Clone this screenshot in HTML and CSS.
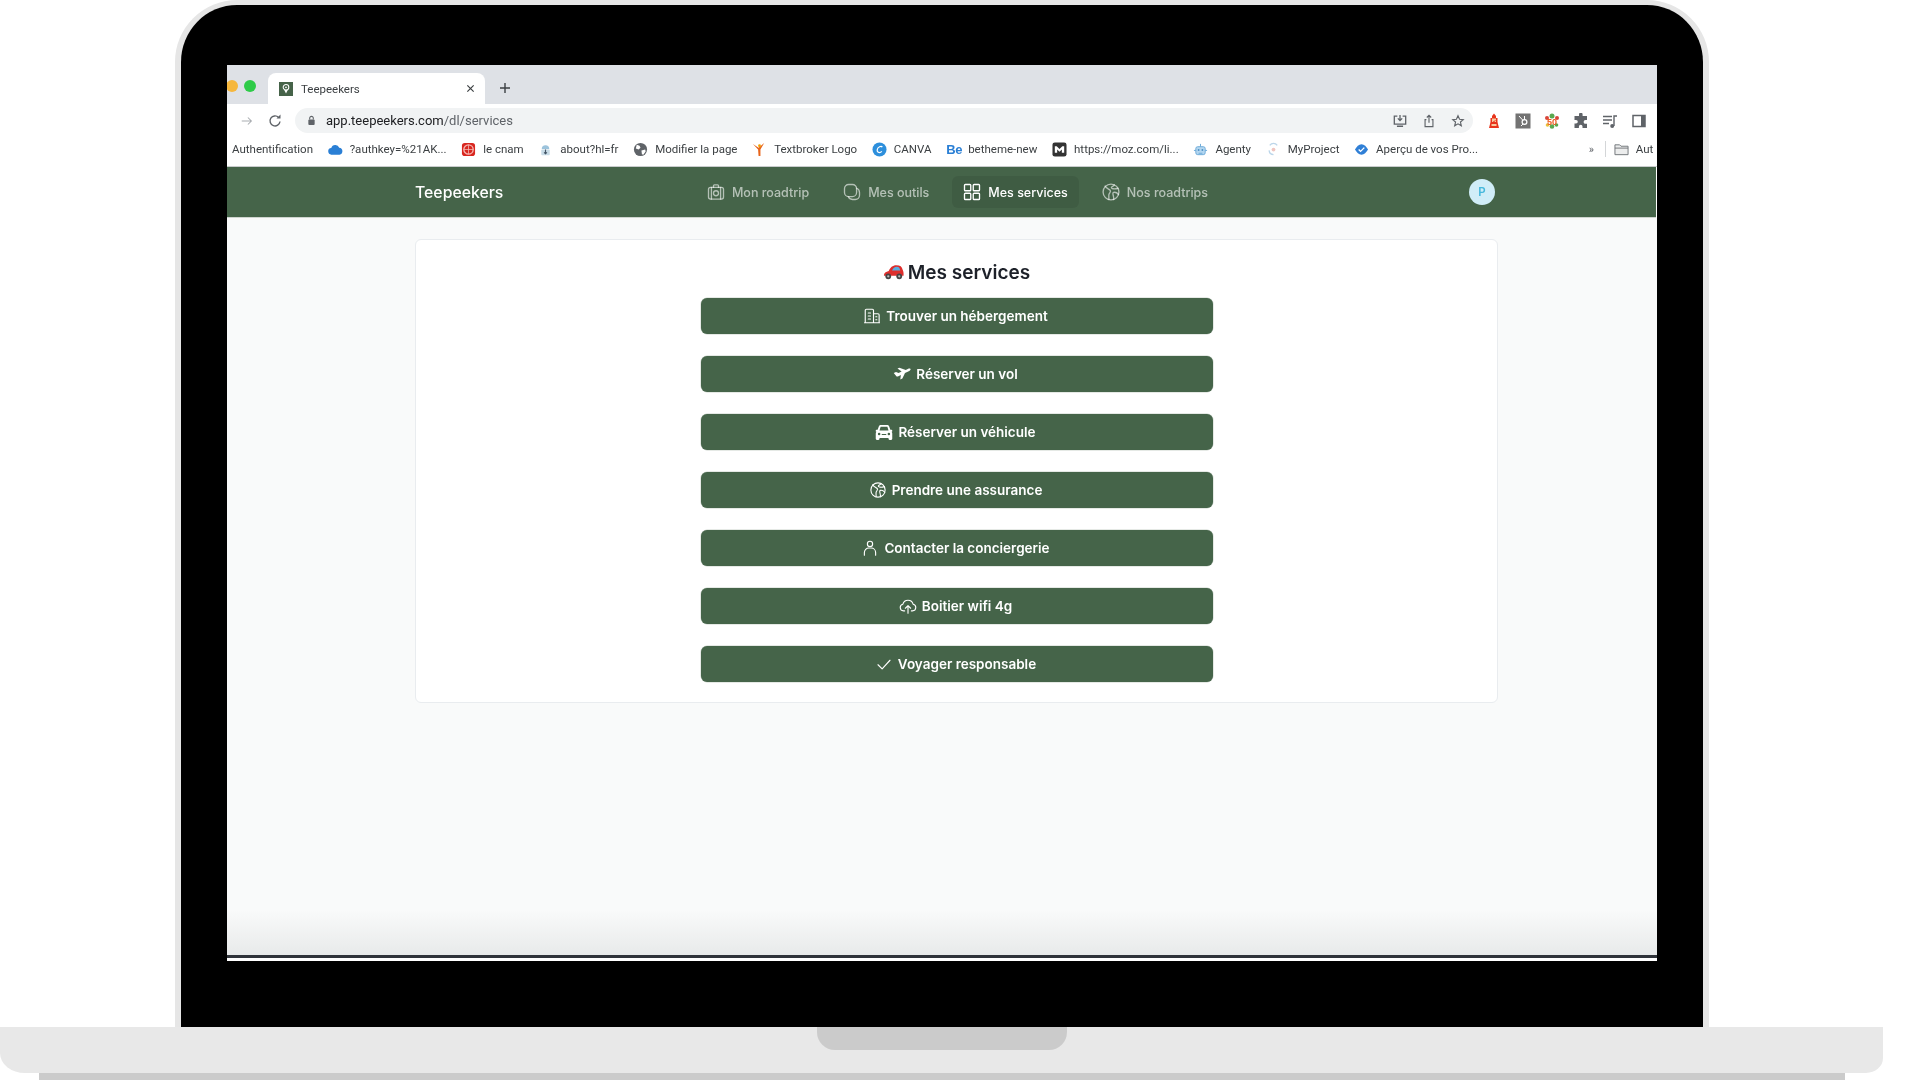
FILE: index.html
```html
<!DOCTYPE html>
<html lang="fr">
<head>
<meta charset="utf-8">
<title>Teepeekers</title>
<link rel="stylesheet" href="styles.css">
</head>
<body>
<div class="device">
  <div class="lid">
    <div class="screen">
      <div class="tabstrip">
        <span class="light yellow"></span>
        <span class="light green"></span>
        <div class="tab">
          <svg class="favicon" viewBox="0 0 16 16"><rect width="16" height="16" fill="#466349"/><circle cx="8" cy="6" r="3.2" fill="none" stroke="#fff" stroke-width="1.2"/><path d="M6 9l2 4 2-4" fill="#fff"/><circle cx="8" cy="6" r="1" fill="#fff"/></svg>
          <span class="tab-title">Teepeekers</span>
          <svg class="tab-close" viewBox="0 0 10 10"><path d="M1.5 1.5l7 7M8.5 1.5l-7 7" stroke="#3c4043" stroke-width="1.3"/></svg>
        </div>
        <svg class="tab-new" viewBox="0 0 12 12"><path d="M6 1v10M1 6h10" stroke="#3c4043" stroke-width="1.4"/></svg>
      </div>
      <div class="toolbar">
        <span class="tool"><svg viewBox="0 0 16 16" class="ic14"><path d="M2 8h11M9 4l4 4-4 4" fill="none" stroke="#a9adb1" stroke-width="1.2"/></svg></span>
        <span class="tool tool-reload"><svg viewBox="0 0 16 16" class="ic16"><path d="M13 8.5A5 5 0 1 1 11.6 4.4" fill="none" stroke="#5f6368" stroke-width="1.4"/><path d="M9.5 5.4h4v-4z" fill="#5f6368"/></svg></span>
        <div class="address">
          <svg class="lock" viewBox="0 0 10 12"><path d="M3 5V3.4a2 2 0 0 1 4 0V5" fill="none" stroke="#5f6368" stroke-width="1.2"/><rect x="1.5" y="5" width="7" height="6" rx="1" fill="#5f6368"/></svg>
          <span class="url">app.teepeekers.com<span class="url-path">/dl/services</span></span>
          <span class="addr-icon"><svg viewBox="0 0 16 16" class="ic14"><path d="M5 2.500H1.500v9h13v-9H11M8 1v6.500M5.500 5L8 7.500 10.500 5M4.500 14h7" fill="none" stroke="#5f6368" stroke-width="1.500"/></svg></span>
          <span class="addr-icon"><svg viewBox="0 0 16 16" class="ic14"><path d="M5 6.500H3.500v8h9v-8H11M8 10V1.500M5.500 4L8 1.500 10.500 4" fill="none" stroke="#5f6368" stroke-width="1.3"/></svg></span>
          <span class="addr-icon"><svg viewBox="0 0 16 16" class="ic14"><path d="M8 2l1.800 4 4.200.4-3.200 2.800 1 4.300L8 11.200 4.200 13.500l1-4.300L2 6.400 6.200 6z" fill="none" stroke="#5f6368" stroke-width="1.3"/></svg></span>
        </div>
        <div class="extensions">
          <span class="tool"><svg viewBox="0 0 16 16" class="ic16"><path d="M8 .5l2 2.500v2h1.500V9L13 15H3L4.500 9V5H6V3z" fill="#e8341c"/><rect x="6" y="5.500" width="4" height="3.500" fill="#f7c9a0"/><path d="M6.500 9.500l3-2" stroke="#e8341c"/><rect x="5.500" y="11" width="5" height="2" fill="#f7c9a0"/></svg></span>
          <span class="tool"><svg viewBox="0 0 16 16" class="ic16"><rect width="15" height="15" x=".5" y=".5" fill="#737373"/><circle cx="9.500" cy="9" r="2.400" fill="none" stroke="#fff" stroke-width="1.200"/><path d="M4 3l3.800 4.200M9.500 3v3.500M6 13l2-2" stroke="#fff" stroke-width="1"/></svg></span>
          <span class="tool"><svg viewBox="0 0 16 16" class="ic16"><circle cx="8" cy="3" r="2.500" fill="#5aa84f"/><circle cx="3" cy="5" r="2" fill="#d9453a"/><circle cx="13" cy="5" r="2" fill="#d9453a"/><circle cx="8" cy="13.500" r="2.300" fill="#5aa84f"/><circle cx="3.500" cy="12" r="1.800" fill="#e9c23d"/><circle cx="12.500" cy="12" r="1.800" fill="#5aa84f"/><text class="ext-fifty" x="8" y="11.500" text-anchor="middle">50</text></svg></span>
          <span class="tool"><svg viewBox="0 0 16 16" class="ic16"><path d="M6 1.500a1.800 1.800 0 0 1 3.600 0V3H14v4h-1.500a1.900 1.900 0 0 0 0 3.800H14V15H9.500v-1.500a1.800 1.800 0 0 0-3.600 0V15H1.500v-4.500H3a1.800 1.800 0 0 0 0-3.600H1.500V3H6z" fill="#5f6368"/></svg></span>
          <span class="tool"><svg viewBox="0 0 16 16" class="ic16"><path d="M1 3.500h9M1 7h9M1 10.500h6" stroke="#5f6368" stroke-width="1.400"/><path d="M12 13V3h3" fill="none" stroke="#5f6368" stroke-width="1.400"/><circle cx="10.200" cy="13" r="2" fill="#5f6368"/></svg></span>
          <span class="tool"><svg viewBox="0 0 16 16" class="ic16"><rect x="2" y="2.500" width="12" height="11" fill="none" stroke="#5f6368" stroke-width="1.500"/><rect x="10" y="2.500" width="4" height="11" fill="#5f6368"/></svg></span>
        </div>
      </div>
      <div class="bookmarks">
        <span class="bm">Authentification</span>
        <span class="bm"><svg class="bm-ic" viewBox="0 0 16 12"><path d="M4 11.500a3.500 3.500 0 0 1-.5-7A4.500 4.500 0 0 1 12 4a3.800 3.800 0 0 1 .3 7.500z" fill="#2a7fd5"/></svg>?authkey=%21AK...</span>
        <span class="bm"><svg class="bm-ic" viewBox="0 0 16 16"><rect x="1" y="1" width="14" height="14" rx="3" fill="#d8261f"/><circle cx="8" cy="8" r="5" fill="none" stroke="#f6b9b4" stroke-width="1.400"/><path d="M8 3v10M3 8h10" stroke="#f6b9b4" stroke-width=".8"/></svg>le cnam</span>
        <span class="bm"><svg class="bm-ic" viewBox="0 0 16 16"><path d="M4 7.500a4 4 0 0 1 8 0z" fill="#9cc3dc"/><rect x="3.500" y="8" width="9" height="6" rx="1" fill="#c7dbe7"/><path d="M8 8v4.500M6.500 11L8 12.500 9.500 11" stroke="#456" fill="none" stroke-width="1.200"/></svg>about?hl=fr</span>
        <span class="bm"><svg class="bm-ic" viewBox="0 0 16 16"><circle cx="8" cy="8" r="7" fill="#5f6368"/><path d="M4 3l3 1 1 2-2 2-3-1zM9 9l4-1 .5 2-2.500 3.500-1.500-.500z" fill="#fff"/></svg>Modifier la page</span>
        <span class="bm"><svg class="bm-ic" viewBox="0 0 16 16"><path d="M1 2l6 4 6-5-4 7 0 7H7L6.500 8z" fill="#e8641b"/><circle cx="8" cy="4" r="1.500" fill="#f2a100"/></svg>Textbroker Logo</span>
        <span class="bm"><svg class="bm-ic" viewBox="0 0 16 16"><circle cx="8" cy="8" r="7.500" fill="#2d8fdc"/><path d="M11 5.500C10 3.800 6 5 5.500 8.500 5.200 11.500 8.500 12 10.500 10" fill="none" stroke="#fff" stroke-width="1.300"/></svg>CANVA</span>
        <span class="bm"><span class="behance">Be</span>betheme-new</span>
        <span class="bm"><svg class="bm-ic" viewBox="0 0 16 16"><rect x=".5" y=".5" width="15" height="15" rx="2.500" fill="#333"/><path d="M3 11.500V4.500h2l3 3 3-3h2v7h-2.500V8L8 10.500 5.500 8v3.500z" fill="#fff"/></svg>https://moz.com/li...</span>
        <span class="bm"><svg class="bm-ic" viewBox="0 0 16 16"><rect x="3" y="5" width="10" height="8.500" rx="2" fill="#b3d6f0" stroke="#6aa9d8"/><path d="M8 5V2M1 9h2M13 9h2M6 12h4" stroke="#6aa9d8"/><circle cx="6" cy="8.500" r="1" fill="#4c8fc4"/><circle cx="10" cy="8.500" r="1" fill="#4c8fc4"/></svg>Agenty</span>
        <span class="bm"><svg class="bm-ic" viewBox="0 0 16 16"><path d="M4 3.500a5 5 0 0 1 8 0M3.300 9A5 5 0 0 0 8 13.500" fill="none" stroke="#bcd6ea" stroke-width="1.400"/><circle cx="8" cy="8" r="2" fill="#eec5c0"/></svg>MyProject</span>
        <span class="bm"><svg class="bm-ic" viewBox="0 0 16 14"><path d="M8 1.500c3 0 5 2.500 7 5.500-2 3-4 5.500-7 5.500S3 10 1 7c2-3 4-5.500 7-5.500z" fill="#2f7fd6"/><path d="M5 7l2 2 4-4" fill="none" stroke="#fff" stroke-width="1.500"/></svg>Aperçu de vos Pro...</span>
        <span class="bm-more">»</span>
        <span class="bm-sep"></span>
        <span class="bm bm-folder"><svg class="bm-ic" viewBox="0 0 16 14"><path d="M1 12.500V2h5l1.500 1.500H15v9z" fill="#eceded" stroke="#6f7378"/><path d="M1 5.500h14" stroke="#6f7378"/></svg>Aut</span>
      </div>
      <nav class="appnav">
        <span class="brand">Teepeekers</span>
        <div class="menu">
          <a class="menu-item"><svg class="ic" viewBox="0 0 24 24"><rect x="3" y="6.500" width="18" height="14" rx="2.500"/><path d="M9 6.500V4.500a1 1 0 0 1 1-1h4a1 1 0 0 1 1 1v2"/><circle cx="12" cy="13.500" r="3"/><path d="M6.500 6.500v14M17.500 6.500v14"/></svg>Mon roadtrip</a>
          <a class="menu-item"><svg class="ic" viewBox="0 0 24 24"><rect x="3" y="3" width="14.500" height="14.500" rx="5"/><path d="M17.500 7.500a5.500 5.500 0 0 1 3.500 5V16a5 5 0 0 1-5 5h-3.500a5.500 5.500 0 0 1-5-3.500"/></svg>Mes outils</a>
          <a class="menu-item active"><svg class="ic" viewBox="0 0 24 24"><rect x="3" y="3" width="7.500" height="7.500" rx="1"/><rect x="13.500" y="3" width="7.500" height="7.500" rx="1"/><rect x="3" y="13.500" width="7.500" height="7.500" rx="1"/><rect x="13.500" y="13.500" width="7.500" height="7.500" rx="1"/></svg>Mes services</a>
          <a class="menu-item"><svg class="ic" viewBox="0 0 24 24"><circle cx="12" cy="12" r="9.500"/><path d="M5 5c1.500 3 4 3 6 5 1.500 1.500-1 3-1.500 5-.3 2 0 4 0 6M21 15c-2-2.500-4-3-6-2.500-1.500.5-.5 3 0 5 .3 1 .3 2.500 0 3.500M16 3.500c-1 2-3 1.500-3.500 3-.3 1.500 3 2.500 8 1"/></svg>Nos roadtrips</a>
        </div>
        <span class="avatar">P</span>
      </nav>
      <main class="content">
        <section class="card">
          <h1 class="card-title">
            <svg class="car" viewBox="0 0 22 16"><path d="M1 11.500c0-2.500 2-3.500 5-4.500C7.500 3.500 10 1 14 1s6 1.500 6.500 4.500c1 2 1.300 4 1 6.500H1z" fill="#dd2e2c"/><path d="M9.500 6.500c1-2.500 2.500-4 5-4 2 0 3 1 3.500 4z" fill="#5aaee0"/><circle cx="5.500" cy="12.500" r="3" fill="#444"/><circle cx="17" cy="12.500" r="3" fill="#444"/><circle cx="5.500" cy="12.500" r="1.200" fill="#bbb"/><circle cx="17" cy="12.500" r="1.200" fill="#bbb"/></svg>
            Mes services
          </h1>
          <div class="actions">
            <a class="action"><svg class="ic" viewBox="0 0 24 24"><path d="M3 21V4.500A1.500 1.500 0 0 1 4.500 3h8A1.500 1.500 0 0 1 14 4.500V21M14 9h6a1.500 1.500 0 0 1 1.500 1.500V21M2 21h20M7 8h3M7 12h3M7 16h3M17 13h1.500M17 17h1.500" /></svg><span class="label">Trouver un hébergement</span></a>
            <a class="action"><svg class="ic fill" viewBox="0 0 24 24"><path d="M1 10.500l3-1.300 3.500 1.600 4-2L6 4.500l2.500-1 8.500 3 4-1.800c1.300-.5 2.800.4 2.500 1.300-.3 1-1.500 1.800-2.500 2.300l-5 2.500-3.500 7.200-2.800 1.200.8-5.800-4 1.800c-.6.300-1.200.3-1.700 0z"/></svg><span class="label">Réserver un vol</span></a>
            <a class="action"><svg class="ic fill" viewBox="0 0 24 24"><path d="M5.200 4.200C5.600 3 6.700 2.500 8 2.500h8c1.300 0 2.400.5 2.800 1.700L20.500 9H22a1 1 0 0 1 1 1v1a1 1 0 0 1-1 .7c.6.700 1 1.500 1 2.300v7a1.500 1.500 0 0 1-1.500 1.500h-2A1.500 1.500 0 0 1 18 21v-1H6v1a1.500 1.500 0 0 1-1.500 1.500h-2A1.500 1.500 0 0 1 1 21v-7c0-.8.400-1.600 1-2.300a1 1 0 0 1-1-.7v-1a1 1 0 0 1 1-1h1.500zM7.500 5L6 10h12l-1.500-5zM5.500 13a1.700 1.700 0 1 0 0 3.400 1.700 1.700 0 0 0 0-3.400zm13 0a1.700 1.700 0 1 0 0 3.400 1.700 1.700 0 0 0 0-3.400zM9 14.500v1.500h6v-1.500z" fill-rule="evenodd"/></svg><span class="label">Réserver un véhicule</span></a>
            <a class="action"><svg class="ic" viewBox="0 0 24 24"><circle cx="12" cy="12" r="9.500"/><path d="M5 5c1.500 3 4 3 6 5 1.500 1.500-1 3-1.500 5-.3 2 0 4 0 6M21 15c-2-2.500-4-3-6-2.500-1.500.5-.5 3 0 5 .3 1 .3 2.500 0 3.500M16 3.500c-1 2-3 1.500-3.500 3-.3 1.500 3 2.500 8 1"/></svg><span class="label">Prendre une assurance</span></a>
            <a class="action"><svg class="ic" viewBox="0 0 24 24"><circle cx="12" cy="6.500" r="3.500"/><path d="M4.500 21.500v-3.500a6 6 0 0 1 6-6h3a6 6 0 0 1 6 6v3.500"/></svg><span class="label">Contacter la conciergerie</span></a>
            <a class="action"><svg class="ic" viewBox="0 0 24 24"><path d="M7.500 18.500H6a4.500 4.500 0 0 1-.8-8.900A7 7 0 0 1 18.800 9.600 4.500 4.500 0 0 1 18 18.500h-1.500M12 21.500V12M8.500 15l3.500-3.500 3.500 3.500"/></svg><span class="label">Boitier wifi 4g</span></a>
            <a class="action"><svg class="ic" viewBox="0 0 24 24"><path d="M4 13l5.500 5.500L20 7"/></svg><span class="label">Voyager responsable</span></a>
          </div>
        </section>
      </main>
      <div class="screen-line"></div>
    </div>
  </div>
  <div class="base"><div class="notch"></div></div>
  <div class="foot"></div>
</div>
</body>
</html>
```

FILE: styles.css
```css
* { box-sizing: border-box; }
html, body { margin: 0; padding: 0; width: 1920px; height: 1080px; overflow: hidden; background: #fff; }
body { font-family: "Inter", "Liberation Sans", sans-serif; }

.device { display: flex; flex-direction: column; width: 1920px; height: 1080px; }

.lid {
  width: 1534px;
  height: 1027px;
  margin-left: 175px;
  padding: 60px 46px 66px;
  background: #000;
  border: 6px solid #e6e6e6;
  border-top-width: 5px;
  border-bottom: 0;
  border-radius: 62px 62px 0 0;
}
.screen {
  width: 1430px;
  height: 896px;
  display: flex;
  flex-direction: column;
  background: #fff;
  overflow: hidden;
  filter: blur(.35px);
}

.tabstrip { flex: none; height: 39px; display: flex; align-items: flex-start; background: #dee1e6; }
.light { width: 12px; height: 12px; margin-top: 15px; border-radius: 50%; flex: none; }
.yellow { background: #f6b73c; margin-left: -1px; }
.green { background: #2ecb48; margin-left: 6px; }
.tab {
  width: 217px; height: 31px; margin: 8px 0 0 12px;
  display: flex; align-items: center; padding: 0 10px 0 11px;
  background: #fff; border-radius: 8px 8px 0 0;
}
.favicon { width: 14px; height: 14px; flex: none; }
.tab-title { margin-left: 8px; flex: 1; font: 11.5px "Roboto", sans-serif; color: #3c4043; }
.tab-close { width: 9px; height: 9px; }
.tab-new { width: 12px; height: 12px; margin: 17px 0 0 14px; }

.toolbar { flex: none; height: 29px; display: flex; align-items: flex-end; padding: 0 4px 0 5px; background: #fff; }
.tool { width: 29px; height: 25px; display: flex; align-items: center; justify-content: center; flex: none; }
.tool-reload { padding-right: 2px; }
.ic14 { width: 14px; height: 14px; }
.ic16 { width: 16px; height: 16px; }
.ext-fifty { font: 700 9px "Liberation Sans", sans-serif; fill: #ee5a1f; }
.address {
  flex: 1; height: 25px; margin-left: 5px; display: flex; align-items: center;
  padding: 0 5px 0 12px; background: #f1f3f4; border-radius: 13px;
}
.lock { width: 9px; height: 11px; flex: none; }
.url { flex: 1; margin-left: 10px; font: 13px "Roboto", sans-serif; color: #202124; }
.url-path { color: #5f6368; }
.addr-icon { width: 20px; display: flex; justify-content: center; margin-left: 9px; }
.extensions { display: flex; margin-left: 6px; }

.bookmarks {
  flex: none; height: 34px; display: flex; align-items: center; padding: 0 0 1px 5px;
  background: #fff; overflow: hidden; border-bottom: 1px solid #c9cccd;
}
.bm {
  display: flex; align-items: center; flex: none; margin-right: 14.700px;
  font: 11.500px "Roboto", sans-serif; color: #3c4043; white-space: nowrap;
}
.bm-ic { width: 15px; height: 15px; margin-right: 7px; flex: none; }
.behance { width: 15px; margin-right: 7px; font: 700 13px "Liberation Sans", sans-serif; color: #2a7fd5; letter-spacing: -.3px; }
.bm-more { margin-left: 96px; width: 16px; font: 11px "Roboto", sans-serif; color: #5f6368; flex: none; }
.bm-sep { width: 1px; height: 16px; background: #d4d6d8; margin-right: 8px; flex: none; }
.bm-folder { margin-right: 0; }

.appnav {
  flex: none; height: 51px; margin-right: 1px; padding: 0 161px 0 188px;
  display: grid; grid-template-columns: 1fr auto 1fr; align-items: center;
  background: #456449; border-bottom: 1px solid #cfd5cf;
}
.brand { font-size: 15.800px; font-weight: 500; color: #fff; }
.menu { display: flex; gap: 12px; margin-left: 5px; }
.menu-item {
  display: flex; align-items: center; gap: 7px; height: 32px; padding: 0 11px;
  font-size: 12.500px; font-weight: 500; color: rgba(255,255,255,.6); border-radius: 6px;
}
.menu-item.active { color: #fff; background: rgba(0,0,0,.08); }
.menu-item .ic { width: 20px; height: 20px; margin: 0 -1px; stroke-width: 1.600; }
.ic { width: 18px; height: 18px; flex: none; fill: none; stroke: currentColor; stroke-width: 1.500; stroke-linecap: round; stroke-linejoin: round; }
.ic.fill { fill: currentColor; stroke: none; }
.avatar {
  justify-self: end; width: 26px; height: 26px; border-radius: 50%;
  display: flex; align-items: center; justify-content: center;
  background: #d0edf8; color: #45b8dc; font-size: 11.500px; font-weight: 600;
}

.content {
  flex: 1; padding: 21px 159px 0 188px;
  background: linear-gradient(to bottom, #f9fafa calc(100% - 45px), #e8eaea 100%);
}
.card {
  height: 464px; padding: 17px 0 0; background: #fff;
  border: 1px solid #e9ecef; border-radius: 6px;
}
.card-title {
  height: 30px; margin: 0 0 11px; display: flex; align-items: center; justify-content: center; gap: 4px;
  font-size: 19px; font-weight: 600; color: #1d2129;
}
.car { width: 21px; height: 16px; flex: none; }
.actions { width: 512px; margin: 0 0 0 285px; display: flex; flex-direction: column; gap: 22px; }
.action {
  height: 36px; display: flex; align-items: center; justify-content: center; gap: 5px; padding-right: 3px;
  background: #456449; border-radius: 6px; color: #fff; font-size: 13.500px; font-weight: 600;
  box-shadow: 0 0 0 .5px #cbd3cb;
}
.label { margin-top: -1px; }

.screen-line { flex: none; height: 6px; border-top: 3px solid #30343a; background: #fff; }

.base { flex: none; height: 46px; width: 1883px; padding-left: 817px; background: #e8e8e8; border-radius: 0 0 17px 25px / 0 0 15px 20px; }
.notch { width: 250px; height: 23px; background: #cbcbcb; border-radius: 0 0 18px 18px; }
.foot { flex: none; height: 7px; width: 1806px; margin-left: 39px; background: #cbcbcb; }
```
